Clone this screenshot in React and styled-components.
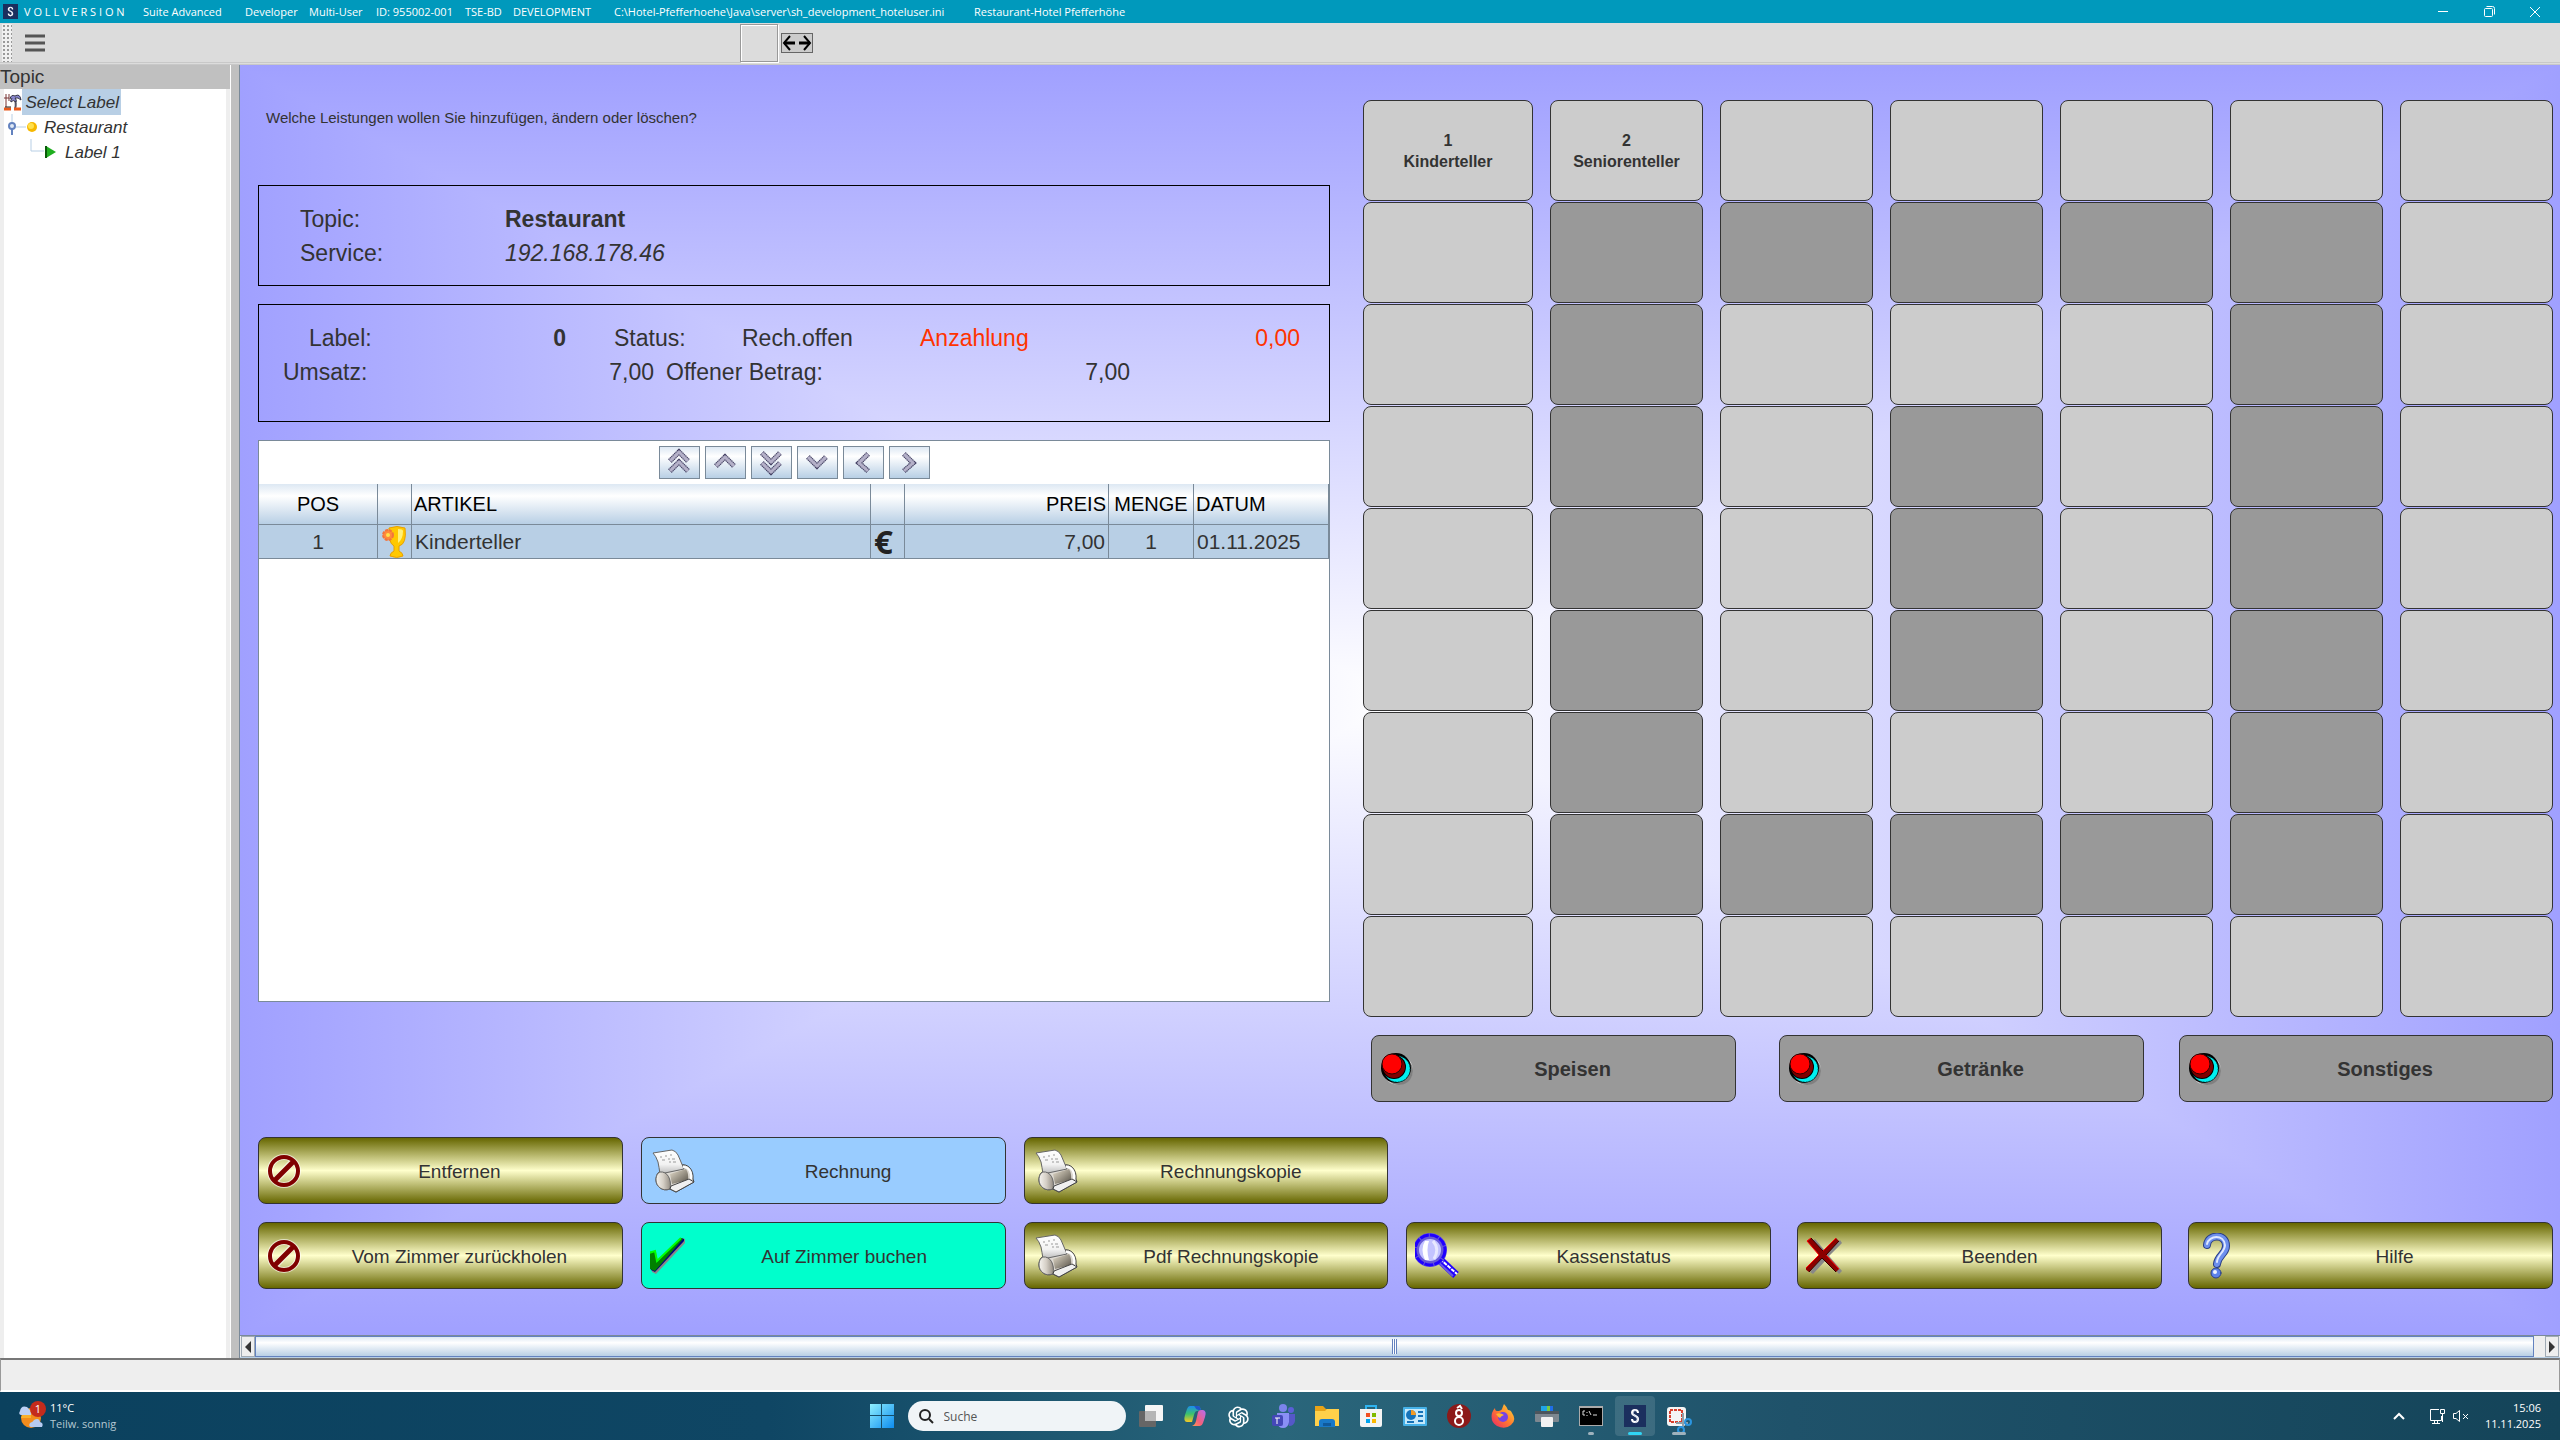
import React from 'react'
import styled, { createGlobalStyle } from 'styled-components'
import { AiOutlineOpenAI } from 'react-icons/ai'

const GlobalStyle = createGlobalStyle`
    * {
        box-sizing: border-box;
    }
    body {
        margin: 0;
        font-family: "Liberation Sans", Arial, sans-serif;
        color: #333;
        background: #eee;
    }
    button, input {
        font-family: inherit;
        color: inherit;
    }
    svg {
        display: block;
        flex: none;
    }
`

const Window = styled.div`
    display: flex;
    flex-direction: column;
    min-height: 100vh;
`

const TitleBar = styled.header`
    display: flex;
    align-items: center;
    height: 23px;
    padding: 0 2px 0 3px;
    background: #0099bc;
    color: #fff;
    font-family: "Open Sans", "Noto Sans", sans-serif;
    font-size: 11px;
    white-space: pre;
`

const TitlePart = styled.span`
    width: ${({ $width }) => $width}px;
`

const WindowControls = styled.div`
    display: flex;
    margin-left: auto;
`

const WindowButton = styled.button`
    display: flex;
    align-items: center;
    justify-content: center;
    width: 46px;
    height: 22px;
    padding: 0;
    border: none;
    background: transparent;
`

const Toolbar = styled.div`
    display: flex;
    align-items: center;
    height: 42px;
    background: #dcdcdc;
    border-bottom: 3px double #c8c8c8;
    padding-left: 2px;
`

const Grip = styled.div`
    width: 10px;
    height: 38px;
    background-color: #f0f0f0;
    background-image: radial-gradient(#999 1px, transparent 1px);
    background-size: 4px 4px;
`

const MenuButton = styled.button`
    padding: 0;
    margin-left: 12px;
    border: none;
    background: transparent;
`

const BlankButton = styled.button`
    width: 38px;
    height: 38px;
    margin-left: 694px;
    border: 1px solid #999;
    box-shadow: 1px 1px 0 #fff, inset 1px 1px 0 #fff;
    background: #dcdcdc;
`

const ResizeButton = styled.button`
    margin-left: 3px;
    padding: 0;
    border: 1px solid #666;
    background: #ccc;
`

const Workspace = styled.div`
    display: flex;
    flex: 1;
`

const Sidebar = styled.nav`
    display: flex;
    flex-direction: column;
    width: 231px;
    background: #eee;
    border-right: 1px solid #fff;
`

const SidebarTitle = styled.div`
    height: 24px;
    line-height: 24px;
    font-size: 19px;
    background: #c0c0c0;
`

const Tree = styled.ul`
    flex: 1;
    margin: 0 4px;
    padding: 0;
    list-style: none;
    background: #fff;
`

const TreeItem = styled.li`
    display: flex;
    align-items: center;
    height: 25px;
    font-size: 17px;
    font-style: italic;
`

const TreeLabel = styled.span`
    padding: 1px 2px 0;
    line-height: 25px;
    background: ${({ $selected }) => ($selected ? '#b8cfe5' : 'transparent')};
`

const Divider = styled.div`
    width: 9px;
    background: #c0c0c0;
    border-right: 1px solid #7a8a99;
`

const Content = styled.div`
    display: flex;
    flex-direction: column;
    flex: 1;
`

const Main = styled.main`
    flex: 1;
    padding: 0 7px 46px 18px;
    background-image: linear-gradient(to right, #a0a0ff, #fff, #a0a0ff),
        linear-gradient(to bottom, #a0a0ff, #fff, #a0a0ff);
    background-blend-mode: darken;
`

const Upper = styled.div`
    display: grid;
    grid-template-columns: 1072fr 1190fr;
    gap: 33px;
`

const Left = styled.section`
    display: flex;
    flex-direction: column;
    gap: 18px;
    margin-bottom: 100px;
`

const Question = styled.p`
    margin: 0;
    height: 102px;
    padding-left: 8px;
    line-height: 105px;
    font-size: 15px;
`

const InfoBox = styled.div`
    height: ${({ $height }) => $height}px;
    padding-top: 16px;
    border: 1px solid #000;
    font-size: 23px;
    line-height: 34px;
`

const InfoRow = styled.div`
    display: flex;
    padding-left: ${({ $indent }) => $indent}px;
`

const Field = styled.span`
    width: ${({ $width }) => $width}px;
    margin-left: ${({ $space }) => $space || 0}px;
    text-align: ${({ $right }) => ($right ? 'right' : 'left')};
    font-weight: ${({ $bold }) => ($bold ? 'bold' : 'normal')};
    font-style: ${({ $italic }) => ($italic ? 'italic' : 'normal')};
    color: ${({ $due }) => ($due ? '#ff3300' : 'inherit')};
    white-space: nowrap;
`

const TablePanel = styled.div`
    flex: 1;
    min-height: 561px;
    border: 1px solid #7a8a99;
    background: #fff;
`

const NavRow = styled.div`
    display: flex;
    justify-content: center;
    gap: 5px;
    padding: 5px 0;
`

const NavButton = styled.button`
    display: flex;
    align-items: center;
    justify-content: center;
    width: 41px;
    height: 33px;
    padding: 0;
    border: 1px solid #7a8a99;
    background: linear-gradient(#dde8f3, #fff 30%, #b8cfe5);
`

const Positions = styled.table`
    width: 100%;
    table-layout: fixed;
    border-collapse: separate;
    border-spacing: 0;
`

const HeadCell = styled.th`
    height: 41px;
    padding: 1px 2px 0;
    border-right: 1px solid #7a8a99;
    border-bottom: 1px solid #7a8a99;
    background: linear-gradient(#dde8f3, #fff 30%, #b8cfe5);
    color: #000;
    font-size: 20px;
    font-weight: normal;
    text-align: ${({ $align }) => $align || 'left'};
    white-space: nowrap;
`

const Cell = styled.td`
    height: 34px;
    padding: 0 3px;
    border-right: 1px solid #7a8a99;
    border-bottom: 1px solid #7a8a99;
    background: #b8cfe5;
    font-size: 21px;
    line-height: 32px;
    text-align: ${({ $align }) => $align || 'left'};
    white-space: nowrap;
`

const Euro = styled.span`
    display: block;
    color: #222;
    font-family: "Open Sans", sans-serif;
    font-size: 33px;
    font-weight: bold;
    line-height: 32px;
`

const Right = styled.section`
    padding-top: 35px;
`

const ArticleGrid = styled.div`
    display: grid;
    grid-template-columns: 170fr repeat(6, 153fr);
    grid-auto-rows: 101px;
    gap: 1px 17px;
`

const ArticleButton = styled.button`
    padding: 0;
    border: 1px solid #333;
    border-radius: 8px;
    background: ${({ $dark }) => ($dark ? '#999' : '#ccc')};
    font-size: 16px;
    font-weight: bold;
    line-height: 21px;
    white-space: pre-line;
`

const Categories = styled.div`
    display: flex;
    padding: 18px 0 0 8px;
`

const fills = {
    olive: 'linear-gradient(#660, #ffc, #660)',
    blue: '#99ccff',
    green: '#00ffcc',
    grey: '#999',
}

const ActionButton = styled.button`
    display: flex;
    align-items: center;
    height: 67px;
    padding: 0 0 0 8px;
    border: 1px solid #333;
    border-radius: 8px;
    background: ${({ $fill }) => fills[$fill || 'olive']};
    font-size: 19px;
`

const CategoryButton = styled(ActionButton)`
    flex: ${({ $grow }) => $grow} 1 0;
    margin-right: ${({ $after }) => $after}px;
    font-size: 20px;
    font-weight: bold;
`

const ButtonText = styled.span`
    flex: 1;
    padding-top: 2px;
    padding-right: 4px;
    text-align: center;
`

const Lower = styled.div`
    display: flex;
    align-items: flex-end;
    gap: 26px;
    padding-top: 35px;
`

const ActionGroup = styled.div`
    display: grid;
    flex: ${({ $grow }) => $grow} 1 0;
    grid-template-columns: repeat(${({ $columns }) => $columns}, 1fr);
    gap: 18px ${({ $gap }) => $gap}px;
`

const ScrollBar = styled.div`
    display: flex;
    height: 23px;
    padding: 0 1px;
    border-top: 1px solid #7a8a99;
    border-bottom: 1px solid #b8cfe5;
    background: #eee;
`

const ScrollArrow = styled.button`
    display: flex;
    align-items: center;
    justify-content: center;
    width: 14px;
    padding: 0;
    border: 1px solid #a0aab4;
    background: #eee;
`

const ScrollThumb = styled.div`
    display: flex;
    align-items: center;
    justify-content: center;
    flex: 1;
    margin-right: 11px;
    border: 1px solid #6382bf;
    background: linear-gradient(#dde8f3, #fff 30%, #b8cfe5);
`

const ThumbGrip = styled.div`
    width: 5px;
    height: 15px;
    background: repeating-linear-gradient(to right, #6382bf 0 1px, #fff 1px 2px);
`

const StatusBar = styled.footer`
    height: 34px;
    border: 1px solid #999;
    border-top: 2px solid #777;
    border-bottom: 2px solid #fff;
    background: #eee;
`

const Taskbar = styled.div`
    display: grid;
    grid-template-columns: 1fr auto 1fr;
    align-items: center;
    height: 48px;
    background: linear-gradient(to right, #0b415e, #0f4664 30%, #2a667b 50%, #1f526a 70%, #144459);
    color: #fff;
    font-family: "Open Sans", "Noto Sans", sans-serif;
    font-size: 11px;
    line-height: 16px;
`

const Weather = styled.div`
    display: flex;
    align-items: center;
    gap: 4px;
    padding-left: 18px;
`

const WeatherText = styled.div`
    color: ${({ $soft }) => ($soft ? '#b4c8d2' : '#fff')};
`

const Apps = styled.div`
    display: flex;
    align-items: center;
`

const AppButton = styled.button`
    position: relative;
    display: flex;
    align-items: center;
    justify-content: center;
    width: 44px;
    height: 48px;
    padding: 0;
    border: none;
    background: transparent;
    ${({ $active }) => $active && `
        width: 40px;
        height: 40px;
        margin: 0 2px;
        border-radius: 4px;
        background: rgba(255, 255, 255, 0.12);
    `}
`

const Indicator = styled.span`
    position: absolute;
    bottom: ${({ $active }) => ($active ? 1 : 5)}px;
    left: 50%;
    width: ${({ $width }) => $width}px;
    height: 3px;
    border-radius: 2px;
    transform: translateX(-50%);
    background: ${({ $active }) => ($active ? '#30d5f5' : '#9fb2bd')};
`

const Search = styled.label`
    display: flex;
    align-items: center;
    gap: 10px;
    width: 218px;
    height: 30px;
    margin: 0 3px 0 4px;
    padding: 0 10px;
    border-radius: 15px;
    background: #f0f4f7;
`

const SearchInput = styled.input`
    width: 150px;
    padding: 0;
    border: none;
    outline: none;
    background: transparent;
    font-size: 12px;

    &::placeholder {
        color: #555;
        opacity: 1;
    }
`

const Tray = styled.div`
    display: flex;
    align-items: center;
    justify-content: flex-end;
    padding-right: 19px;
`

const TrayIcons = styled.div`
    display: flex;
    align-items: center;
    gap: 8px;
    margin-right: 16px;
`

const Clock = styled.div`
    text-align: right;
`

// ---- icons ----

const ForbiddenIcon = () => (
    <svg width="34" height="34" viewBox="0 0 34 34" fill="none">
        <circle cx="17" cy="17" r="14" stroke="#fff" strokeWidth="6" opacity="0.6" />
        <path d="M8 27L26 7" stroke="#fff" strokeWidth="7" opacity="0.6" />
        <circle cx="17" cy="17" r="14" stroke="#800000" strokeWidth="4" />
        <path d="M8 26L26 8" stroke="#800000" strokeWidth="5" />
    </svg>
)

const PrinterIcon = () => (
    <svg width="46" height="44" viewBox="-2 0 46 44" strokeLinejoin="round">
        <defs>
            <linearGradient id="paper" x1="0" y1="0" x2="0" y2="1">
                <stop offset="0" stopColor="#fff" />
                <stop offset="0.6" stopColor="#f2f2f2" />
                <stop offset="1" stopColor="#bbb" />
            </linearGradient>
            <linearGradient id="roll" x1="0" y1="0" x2="1" y2="0">
                <stop offset="0" stopColor="#f6f4f0" />
                <stop offset="0.5" stopColor="#d5cfc6" />
                <stop offset="1" stopColor="#958e84" />
            </linearGradient>
            <linearGradient id="slot" x1="0" y1="0" x2="1" y2="1">
                <stop offset="0" stopColor="#e8e0cf" />
                <stop offset="1" stopColor="#555046" />
            </linearGradient>
        </defs>
        <path d="M28 16C36 14 42 21 41 30L42 33L24 43L18 40C10 43 4 37 4 31C4 26 6 23 9 22Z" fill="#dedad3" stroke="#444" />
        <path d="M1 4L20 1Q24 2 26 6L32 20L8 25Q7 18 6 13Q4 7 1 4Z" fill="url(#paper)" stroke="#666" />
        <path d="M8 8h2m3-1h2m3-1h2M10 11h3m3-1h2m2 0h3M17 13h2m2 0h3" stroke="#999" strokeWidth="1" />
        <path d="M18 25L34 20Q37 25 36 31L20 35Z" fill="url(#slot)" />
        <path d="M8 23C15 22 20 30 18 40C10 43 4 37 4 31C4 26 6 24 8 23Z" fill="url(#roll)" stroke="#666" />
        <path d="M19 37L37 30L42 33L24 43L18 40Z" fill="#f0f0f0" stroke="#444" />
        <path d="M31 18C37 17 40 24 39 30" stroke="#fff" strokeWidth="2" fill="none" />
    </svg>
)

const CheckIcon = () => (
    <svg width="38" height="38" viewBox="2 0 38 38">
        <path d="M2 17L8 15L10 25L34 1L37 2L37 6L8 37L4 35Z" fill="#888" />
        <path d="M1 16L7 14L9 25L33 1L36 2L36 4L7 35L3 33Z" fill="#000080" />
        <path d="M1 15L7 14L9 25L33 1L35 2L7 34L2 32Z" fill="#008000" />
        <path d="M1 31L1 16L7 14L9 24L33 1" fill="none" stroke="#0f0" strokeWidth="2" />
    </svg>
)

const MagnifierIcon = () => (
    <svg width="46" height="46" viewBox="3 0 46 46">
        <path d="M28 27L44 42" stroke="#2000ff" strokeWidth="8" />
        <path d="M28 26L45 41" stroke="#fff" strokeWidth="2" strokeDasharray="4 1" />
        <path d="M26 29L41 43" stroke="#6a5ae0" strokeWidth="2" />
        <circle cx="18" cy="17" r="14" fill="#c3c3ff" stroke="#6658d8" strokeWidth="6" />
        <circle cx="18" cy="17" r="15" fill="none" stroke="#2000ff" strokeWidth="3" strokeDasharray="9 1" />
        <path d="M13 8Q8 16 13 27L17 27Q14 16 17 8Z" fill="#fff" />
        <path d="M21 8Q28 16 22 26" fill="none" stroke="#e8e8ff" strokeWidth="3" />
    </svg>
)

const CrossIcon = () => (
    <svg width="36" height="37" viewBox="1 0 36 37">
        <path d="M5 4L9 1L20 14L34 2L36 5L23 18L36 33L33 36L20 22L7 36L4 34L17 18Z" fill="#888" transform="translate(1 1)" />
        <path d="M2 4L6 1L18 14L31 1L34 4L21 18L34 32L31 35L17 21L4 35L0 32L14 18Z" fill="#8b0000" />
        <path d="M0 32L14 18L2 4L6 1M18 14L31 1M21 18L34 32" fill="none" stroke="#f00" strokeWidth="1" />
        <path d="M6 1L18 14M34 4L21 18M31 35L17 21L4 35" fill="none" stroke="#300" strokeWidth="1" />
    </svg>
)

const HelpIcon = () => (
    <svg width="44" height="46" viewBox="3 0 44 46" fill="none" strokeLinecap="round">
        <path d="M13 12C14 1 32 0 32 13C32 21 24 22 23 31" stroke="#2b3f85" strokeWidth="8" />
        <path d="M13 12C14 1 32 0 32 13C32 21 24 22 23 31" stroke="#6d90ee" strokeWidth="6" />
        <path d="M13 11C15 2 30 1 31 12C31 19 23 22 23 29" stroke="#dfe8ff" strokeWidth="2" />
        <circle cx="22" cy="40" r="5" fill="#5d83ea" stroke="#2b3f85" strokeWidth="1" />
        <circle cx="21" cy="39" r="2" fill="#f0f5ff" />
    </svg>
)

const LampIcon = () => (
    <svg width="34" height="34" viewBox="0 0 34 34">
        <circle cx="18" cy="18" r="15" fill="#ddd" />
        <circle cx="19" cy="19" r="14" fill="#808080" />
        <circle cx="16" cy="16" r="15" fill="#000" />
        <circle cx="17" cy="17" r="13" fill="#00f0f0" />
        <circle cx="17" cy="17" r="13" fill="none" stroke="#066" strokeDasharray="1 2" />
        <circle cx="14" cy="15" r="12" fill="#000" />
        <circle cx="14" cy="15" r="11" fill="#800000" />
        <circle cx="12" cy="12" r="10" fill="#f00" stroke="#300" />
    </svg>
)

const TrophyIcon = () => (
    <svg width="28" height="32" viewBox="2 0 28 32">
        <path d="M10 2Q18 -1 26 2Q28 18 20 20V25Q24 27 24 30Q18 33 11 30Q11 27 15 25V20Q9 17 10 2Z" fill="#ffc800" stroke="#e8a000" />
        <path d="M19 3Q24 3 24 5Q24 13 19 17Z" fill="#fff07a" />
        <circle cx="9" cy="9" r="5" fill="#ff8a3c" stroke="#f2743c" strokeDasharray="3 1" strokeWidth="2" />
        <circle cx="9" cy="9" r="2" fill="#ffe14d" />
    </svg>
)

const PalmIcon = () => (
    <svg width="18" height="18" viewBox="0 0 18 18" fill="none">
        <path d="M2 1V14M0 5H5M5 1V8" stroke="#733" strokeWidth="1" />
        <path d="M11 16Q13 10 10 5" stroke="#556" strokeWidth="2" />
        <path d="M6 6Q7 1 11 3Q16 0 17 7Q14 4 11 5Q13 7 12 9Q9 6 7 9Q6 8 8 5" fill="#8a88d0" stroke="#334" />
        <path d="M0 16H7M10 16H17" stroke="#e8591c" strokeWidth="3" />
        <path d="M1 14H7" stroke="#222" />
    </svg>
)

const BranchIcon = () => (
    <svg width="38" height="25" viewBox="0 0 38 25">
        <path d="M8 0V10M12 13H22" stroke="#b8cfe5" />
        <path d="M8 14V21" stroke="#6382bf" strokeWidth="2" />
        <circle cx="8" cy="12" r="3" fill="#dfe9f5" stroke="#6382bf" strokeWidth="2" />
        <circle cx="28" cy="13" r="5" fill="#f6b800" />
        <circle cx="27" cy="12" r="3" fill="#ffe04d" />
    </svg>
)

const LeafIcon = () => (
    <svg width="59" height="25" viewBox="0 0 59 25">
        <path d="M27 0V12H40" fill="none" stroke="#b8cfe5" />
        <path d="M42 7L52 13L42 19Z" fill="#1fae1f" />
        <path d="M42 7V19" stroke="#0a5c0a" strokeWidth="2" />
    </svg>
)

const chevrons = {
    first: ['M10 14L19 5L28 14', 'M10 24L19 15L28 24'],
    up: ['M10 19L19 10L28 19'],
    last: ['M10 6L19 15L28 6', 'M10 16L19 25L28 16'],
    down: ['M10 10L19 19L28 10'],
    left: ['M24 7L15 16L24 24'],
    right: ['M14 7L23 16L14 24'],
}

const NavIcon = ({ name }) => (
    <svg width="38" height="31" viewBox="0 0 38 31" fill="none">
        {chevrons[name].map((d) => (
            <g key={d}>
                <path d={d} stroke="#1c1840" strokeWidth="5" strokeDasharray="1 1" />
                <path d={d} stroke="#5c5878" strokeWidth="5" opacity="0.6" />
                <path d={d} stroke="#b4b0c8" strokeWidth="3" />
            </g>
        ))}
    </svg>
)

const AppLogo = ({ size }) => (
    <svg width={size} height={size} viewBox="0 0 22 22" fill="none">
        <rect width="22" height="22" fill="#1b2f5e" />
        <path d="M14 8C14 4 8 4 8 8C8 11 14 10 14 14C14 18 8 18 8 14" stroke="#fff" strokeWidth="2" />
        <path d="M12 5C9 5 8 10 11 11C15 12 13 17 11 18" stroke="#c9d2e8" strokeWidth="1" />
    </svg>
)

const WeatherIcon = () => (
    <svg width="28" height="30" viewBox="0 0 28 30">
        <circle cx="13" cy="17" r="10" fill="#f28c1c" />
        <path d="M4 14Q9 9 13 8V17H3Z" fill="#f9b02d" />
        <path d="M3 14Q0 13 2 10Q3 4 9 6Q13 9 13 14Z" fill="#bcd0f5" />
        <path d="M13 26Q10 25 12 22Q15 21 16 19Q21 16 22 21Q26 22 24 26Z" fill="#b5cbf2" />
        <circle cx="20" cy="8" r="8" fill="#c42b1c" />
        <text x="20" y="12" textAnchor="middle" fontSize="11" fill="#fff">1</text>
    </svg>
)

const WindowsIcon = () => (
    <svg width="24" height="24" viewBox="0 0 24 24">
        <defs>
            <linearGradient id="win" x1="0" y1="0" x2="1" y2="1">
                <stop offset="0" stopColor="#8ff0ff" />
                <stop offset="1" stopColor="#0c8cf0" />
            </linearGradient>
        </defs>
        <path d="M0 0H11V11H0ZM12 0H24V11H12ZM0 12H11V24H0ZM12 12H24V24H12Z" fill="url(#win)" />
    </svg>
)

const TaskViewIcon = () => (
    <svg width="24" height="24" viewBox="0 0 24 24">
        <rect x="0" y="7" width="17" height="16" rx="1" fill="#666" />
        <rect x="6" y="1" width="18" height="16" rx="1" fill="#f5f5f5" />
        <rect x="6" y="7" width="11" height="10" fill="#b5b5b5" />
    </svg>
)

const CopilotIcon = () => (
    <svg width="24" height="24" viewBox="0 0 24 24">
        <defs>
            <linearGradient id="cop1" x1="0" y1="0" x2="0" y2="1">
                <stop offset="0" stopColor="#1a8df0" />
                <stop offset="0.5" stopColor="#3cc36b" />
                <stop offset="1" stopColor="#f7c825" />
            </linearGradient>
            <linearGradient id="cop2" x1="1" y1="0" x2="0" y2="1">
                <stop offset="0" stopColor="#b76cf2" />
                <stop offset="0.6" stopColor="#f2607c" />
                <stop offset="1" stopColor="#ff9a4d" />
            </linearGradient>
        </defs>
        <path d="M7 2H15Q17 2 18 6L14 7Q12 7 11 11L9 18H4Q0 18 2 11L4 5Q5 2 7 2Z" fill="url(#cop1)" />
        <path d="M17 22H9Q12 21 13 17L15 8Q16 6 18 6H20Q24 7 22 13L20 19Q19 22 17 22Z" fill="url(#cop2)" />
        <path d="M11 2H15Q17 2 18 6H16Q13 6 12 3Z" fill="#2155c8" />
    </svg>
)

const TeamsIcon = () => (
    <svg width="24" height="24" viewBox="0 0 24 24">
        <circle cx="12" cy="4" r="4" fill="#7b83eb" />
        <circle cx="20" cy="6" r="3" fill="#5b5fd8" />
        <path d="M15 10H24V17Q23 22 18 22Z" fill="#5558c8" />
        <path d="M6 9H18V18Q17 24 12 24Q7 24 6 18Z" fill="#8a8ff5" />
        <rect x="1" y="11" width="11" height="11" rx="2" fill="#4448b8" />
        <path d="M4 14H9M6 14V20" stroke="#fff" strokeWidth="1" />
    </svg>
)

const FolderIcon = () => (
    <svg width="24" height="24" viewBox="0 0 24 24">
        <path d="M0 2H8L11 5H24V22H0Z" fill="#e8a317" />
        <path d="M0 7H10L12 5H24V22H0Z" fill="#ffd04a" />
        <path d="M4 23V18Q4 15 7 15H17Q20 15 20 18V23Z" fill="#1979c8" />
        <path d="M8 22V19H16V22Z" fill="#105a9c" />
    </svg>
)

const StoreIcon = () => (
    <svg width="24" height="24" viewBox="0 0 24 24">
        <path d="M7 6V2H17V6" fill="none" stroke="#2fb4f0" strokeWidth="2" />
        <path d="M1 5H23V21Q23 23 21 23H3Q1 23 1 21Z" fill="#f4f4f4" />
        <path d="M7 9H11V13H7Z" fill="#f25022" />
        <path d="M13 9H17V13H13Z" fill="#7fba00" />
        <path d="M7 15H11V19H7Z" fill="#00a4ef" />
        <path d="M13 15H17V19H13Z" fill="#ffb900" />
    </svg>
)

const ControlPanelIcon = () => (
    <svg width="24" height="24" viewBox="0 0 24 24">
        <rect y="3" width="24" height="19" rx="1" fill="#45b1e8" />
        <rect x="2" y="5" width="20" height="15" fill="#c5e9fb" />
        <circle cx="8" cy="11" r="5" fill="#1672b8" />
        <path d="M8 11V6A5 5 0 0 1 13 11Z" fill="#f59a23" />
        <path d="M15 8H20M15 12H20M4 18H11M15 17H20" stroke="#1672b8" strokeWidth="2" />
    </svg>
)

const RedEightIcon = () => (
    <svg width="24" height="24" viewBox="0 0 24 24" fill="none">
        <circle cx="12" cy="12" r="12" fill="#8c1a1a" />
        <circle cx="12" cy="9" r="3" stroke="#fff" strokeWidth="2" />
        <circle cx="12" cy="17" r="4" stroke="#fff" strokeWidth="2" />
        <path d="M10 4L13 2L15 5" stroke="#fff" strokeWidth="2" />
    </svg>
)

const FirefoxIcon = () => (
    <svg width="24" height="24" viewBox="0 0 24 24">
        <defs>
            <linearGradient id="fox" x1="1" y1="0" x2="0" y2="1">
                <stop offset="0" stopColor="#ffe03a" />
                <stop offset="0.5" stopColor="#ff7b2e" />
                <stop offset="1" stopColor="#e8236a" />
            </linearGradient>
        </defs>
        <path d="M13 0Q16 3 17 6Q20 6 21 9Q26 16 20 21Q14 26 6 22Q-1 18 1 9Q2 6 4 4Q4 7 6 7Q10 7 11 5Q12 2 13 0Z" fill="url(#fox)" />
        <circle cx="12" cy="13" r="5" fill="#7542e5" />
        <path d="M5 10Q9 8 13 11Q10 12 9 14Q7 13 5 10Z" fill="#ffb52e" />
    </svg>
)

const TaskPrinterIcon = () => (
    <svg width="24" height="24" viewBox="0 0 24 24">
        <path d="M6 2H12V9H6Z" fill="#1fa4e8" />
        <path d="M12 2H15V9H12Z" fill="#7ac943" />
        <path d="M15 2H18V9H15Z" fill="#1f6ee8" />
        <rect y="7" width="24" height="11" rx="1" fill="#7d8790" />
        <rect y="7" width="24" height="3" fill="#4c555d" />
        <rect x="6" y="13" width="12" height="10" rx="1" fill="#f2f2f2" />
    </svg>
)

const TerminalIcon = () => (
    <svg width="24" height="24" viewBox="0 0 24 24">
        <rect y="2" width="24" height="20" fill="#aaa" />
        <rect x="1" y="4" width="22" height="17" fill="#000" />
        <path d="M6 7H4V11H6M8 8V9M8 11V12M10 7L12 11M14 11H18" stroke="#ddd" fill="none" />
    </svg>
)

const SnipIcon = () => (
    <svg width="26" height="38" viewBox="0 -8 26 38">
        <rect x="1" y="2" width="19" height="19" rx="3" fill="#f4f4f4" />
        <rect x="4" y="5" width="12" height="12" fill="none" stroke="#d8402f" strokeWidth="2" strokeDasharray="3 1" />
        <path d="M17 8V23M10 18H22" stroke="#8fa0aa" strokeWidth="2" />
        <circle cx="22" cy="17" r="3" fill="none" stroke="#2b95e0" strokeWidth="2" />
        <circle cx="15" cy="25" r="3" fill="none" stroke="#2b95e0" strokeWidth="2" />
    </svg>
)

const NetworkIcon = () => (
    <svg width="16" height="18" viewBox="0 0 16 18" fill="none" stroke="#fff">
        <path d="M10 2.500H1.500V13.500H12.500V9" />
        <path d="M3 16.500H11M5.500 14V16M8.500 14V16" />
        <path d="M11.500 2.500H15.500V6.500H11.500ZM13.500 7V15" />
    </svg>
)

const MutedIcon = () => (
    <svg width="16" height="14" viewBox="0 0 16 14" fill="none" stroke="#fff">
        <path d="M0.500 4.500H3L6.500 1.500V12.500L3 9.500H0.500Z" />
        <path d="M10 5L15 10M15 5L10 10" />
    </svg>
)

// ---- data ----

const titleParts = [
    ['V O L L V E R S I O N', 119],
    ['Suite Advanced', 102],
    ['Developer', 64],
    ['Multi-User', 67],
    ['ID: 955002-001', 89],
    ['TSE-BD', 48],
    ['DEVELOPMENT', 101],
    ['C:\\Hotel-Pfefferhoehe\\Java\\server\\sh_development_hoteluser.ini', 360],
    ['Restaurant-Hotel Pfefferhöhe', 160],
]

// d marks the dark article keys
const articleRows = ['.......', '.ddddd.', '.d...d.', '.d.d.d.', '.d.d.d.', '.d.d.d.', '.d...d.', '.ddddd.', '.......']

const articles = ['1\nKinderteller', '2\nSeniorenteller']

const categories = [
    { name: 'Speisen', grow: 365, after: 43 },
    { name: 'Getränke', grow: 365, after: 35 },
    { name: 'Sonstiges', grow: 374, after: 0 },
]

const mainActions = [
    { name: 'Entfernen', icon: <ForbiddenIcon /> },
    { name: 'Rechnung', icon: <PrinterIcon />, fill: 'blue' },
    { name: 'Rechnungskopie', icon: <PrinterIcon /> },
    null,
    { name: 'Vom Zimmer zurückholen', icon: <ForbiddenIcon /> },
    { name: 'Auf Zimmer buchen', icon: <CheckIcon />, fill: 'green' },
    { name: 'Pdf Rechnungskopie', icon: <PrinterIcon /> },
    { name: 'Kassenstatus', icon: <MagnifierIcon /> },
]

const exitActions = [
    { name: 'Beenden', icon: <CrossIcon /> },
    { name: 'Hilfe', icon: <HelpIcon /> },
]

const pinnedApps = [
    ['Taskansicht', <TaskViewIcon />],
    ['Copilot', <CopilotIcon />],
    ['ChatGPT', <AiOutlineOpenAI size={27} color="#fff" />],
    ['Teams', <TeamsIcon />],
    ['Explorer', <FolderIcon />],
    ['Store', <StoreIcon />],
    ['Systemsteuerung', <ControlPanelIcon />],
    ['Kasse', <RedEightIcon />],
    ['Firefox', <FirefoxIcon />],
    ['Drucker', <TaskPrinterIcon />],
]

const Action = ({ action }) => (
    <ActionButton $fill={action.fill}>
        {action.icon}
        <ButtonText>{action.name}</ButtonText>
    </ActionButton>
)

const Header = () => (
    <>
        <TitleBar>
            <AppLogo size={15} />
            <TitlePart $width={6} />
            {titleParts.map(([text, width]) => (
                <TitlePart key={text} $width={width}>{text}</TitlePart>
            ))}
            <WindowControls>
                <WindowButton aria-label="Minimieren">
                    <svg width="10" height="10" viewBox="0 0 10 10"><path d="M0 4.500H10" stroke="#fff" /></svg>
                </WindowButton>
                <WindowButton aria-label="Wiederherstellen">
                    <svg width="11" height="11" viewBox="0 0 11 11" fill="none" stroke="#fff">
                        <rect x="0.5" y="2.5" width="8" height="8" rx="1" />
                        <path d="M2.500 0.500H8.500Q10.500 0.500 10.500 2.500V8.500" />
                    </svg>
                </WindowButton>
                <WindowButton aria-label="Schließen">
                    <svg width="10" height="10" viewBox="0 0 10 10"><path d="M0 0L10 10M10 0L0 10" stroke="#fff" /></svg>
                </WindowButton>
            </WindowControls>
        </TitleBar>
        <Toolbar>
            <Grip />
            <MenuButton aria-label="Menü">
                <svg width="22" height="18" viewBox="0 0 22 18"><path d="M1 2H21M1 9H21M1 16H21" stroke="#555" strokeWidth="3" /></svg>
            </MenuButton>
            <BlankButton aria-label="Leer" />
            <ResizeButton aria-label="Breite anpassen">
                <svg width="30" height="18" viewBox="0 0 30 18" fill="none" stroke="#000">
                    <path d="M2 9H13M17 9H28" strokeWidth="3" />
                    <path d="M8 2L2 9L8 16M22 2L28 9L22 16" strokeWidth="2" />
                </svg>
            </ResizeButton>
        </Toolbar>
    </>
)

const TopicTree = () => (
    <Sidebar>
        <SidebarTitle>Topic</SidebarTitle>
        <Tree>
            <TreeItem><PalmIcon /><TreeLabel $selected>&#8202;Select Label</TreeLabel></TreeItem>
            <TreeItem><BranchIcon /><TreeLabel>Restaurant</TreeLabel></TreeItem>
            <TreeItem><LeafIcon /><TreeLabel>Label 1</TreeLabel></TreeItem>
        </Tree>
    </Sidebar>
)

const Booking = () => (
    <Left>
        <Question>Welche Leistungen wollen Sie hinzufügen, ändern oder löschen?</Question>
        <InfoBox $height={101}>
            <InfoRow $indent={41}>
                <Field $width={205}>Topic:</Field>
                <Field $bold>Restaurant</Field>
            </InfoRow>
            <InfoRow $indent={41}>
                <Field $width={205}>Service:</Field>
                <Field $italic>192.168.178.46</Field>
            </InfoRow>
        </InfoBox>
        <InfoBox $height={118}>
            <InfoRow $indent={50}>
                <Field $width={100}>Label:</Field>
                <Field $width={157} $right $bold>0</Field>
                <Field $width={128} $space={48}>Status:</Field>
                <Field $width={178}>Rech.offen</Field>
                <Field $width={180} $due>Anzahlung</Field>
                <Field $width={200} $right $due>0,00</Field>
            </InfoRow>
            <InfoRow $indent={24}>
                <Field $width={100}>Umsatz:</Field>
                <Field $width={271} $right>7,00</Field>
                <Field $width={200} $space={12}>Offener Betrag:</Field>
                <Field $width={264} $right>7,00</Field>
            </InfoRow>
        </InfoBox>
        <TablePanel>
            <NavRow>
                {Object.keys(chevrons).map((name) => (
                    <NavButton key={name} aria-label={name}><NavIcon name={name} /></NavButton>
                ))}
            </NavRow>
            <Positions>
                <colgroup>
                    <col width="119" />
                    <col width="34" />
                    <col />
                    <col width="34" />
                    <col width="204" />
                    <col width="85" />
                    <col width="135" />
                </colgroup>
                <thead>
                    <tr>
                        <HeadCell $align="center">POS</HeadCell>
                        <HeadCell />
                        <HeadCell>ARTIKEL</HeadCell>
                        <HeadCell />
                        <HeadCell $align="right">PREIS</HeadCell>
                        <HeadCell $align="center">MENGE</HeadCell>
                        <HeadCell>DATUM</HeadCell>
                    </tr>
                </thead>
                <tbody>
                    <tr>
                        <Cell $align="center">1</Cell>
                        <Cell><TrophyIcon /></Cell>
                        <Cell>Kinderteller</Cell>
                        <Cell><Euro>€</Euro></Cell>
                        <Cell $align="right">7,00</Cell>
                        <Cell $align="center">1</Cell>
                        <Cell>01.11.2025</Cell>
                    </tr>
                </tbody>
            </Positions>
        </TablePanel>
    </Left>
)

const Articles = () => (
    <Right>
        <ArticleGrid>
            {articleRows.join('').split('').map((tone, i) => (
                <ArticleButton key={i} $dark={tone === 'd'}>{articles[i]}</ArticleButton>
            ))}
        </ArticleGrid>
        <Categories>
            {categories.map(({ name, grow, after }) => (
                <CategoryButton key={name} $fill="grey" $grow={grow} $after={after}>
                    <LampIcon />
                    <ButtonText>{name}</ButtonText>
                </CategoryButton>
            ))}
        </Categories>
    </Right>
)

const WindowsTaskbar = () => (
    <Taskbar>
        <Weather>
            <WeatherIcon />
            <div>
                <WeatherText>11°C</WeatherText>
                <WeatherText $soft>Teilw. sonnig</WeatherText>
            </div>
        </Weather>
        <Apps>
            <AppButton aria-label="Start"><WindowsIcon /></AppButton>
            <Search>
                <svg width="16" height="16" viewBox="0 0 16 16" fill="none" stroke="#222" strokeWidth="2">
                    <circle cx="7" cy="7" r="5" />
                    <path d="M11 11L15 15" />
                </svg>
                <SearchInput placeholder="Suche" aria-label="Suche" />
            </Search>
            {pinnedApps.map(([name, icon]) => (
                <AppButton key={name} aria-label={name}>{icon}</AppButton>
            ))}
            <AppButton aria-label="Konsole"><TerminalIcon /><Indicator $width={6} /></AppButton>
            <AppButton aria-label="Hotel" $active><AppLogo size={22} /><Indicator $width={14} $active /></AppButton>
            <AppButton aria-label="Snipping Tool"><Indicator $width={14} /><SnipIcon /></AppButton>
        </Apps>
        <Tray>
            <TrayIcons>
                <svg width="28" height="8" viewBox="0 0 28 8"><path d="M1 7L6 2L11 7" fill="none" stroke="#fff" strokeWidth="2" /></svg>
                <NetworkIcon />
                <MutedIcon />
            </TrayIcons>
            <Clock>
                <div>15:06</div>
                <div>11.11.2025</div>
            </Clock>
        </Tray>
    </Taskbar>
)

const App = () => (
    <Window>
        <GlobalStyle />
        <Header />
        <Workspace>
            <TopicTree />
            <Divider />
            <Content>
                <Main>
                    <Upper>
                        <Booking />
                        <Articles />
                    </Upper>
                    <Lower>
                        <ActionGroup $grow={1513} $columns={4} $gap={18}>
                            {mainActions.map((action, i) => (
                                action ? <Action key={action.name} action={action} /> : <span key={i} />
                            ))}
                        </ActionGroup>
                        <ActionGroup $grow={756} $columns={2} $gap={26}>
                            {exitActions.map((action) => <Action key={action.name} action={action} />)}
                        </ActionGroup>
                    </Lower>
                </Main>
                <ScrollBar>
                    <ScrollArrow aria-label="Nach links">
                        <svg width="6" height="12" viewBox="0 0 6 12"><path d="M6 0V12L0 6Z" fill="#333" /></svg>
                    </ScrollArrow>
                    <ScrollThumb><ThumbGrip /></ScrollThumb>
                    <ScrollArrow aria-label="Nach rechts">
                        <svg width="6" height="12" viewBox="0 0 6 12"><path d="M0 0V12L6 6Z" fill="#333" /></svg>
                    </ScrollArrow>
                </ScrollBar>
            </Content>
        </Workspace>
        <StatusBar />
        <WindowsTaskbar />
    </Window>
)

export default App
